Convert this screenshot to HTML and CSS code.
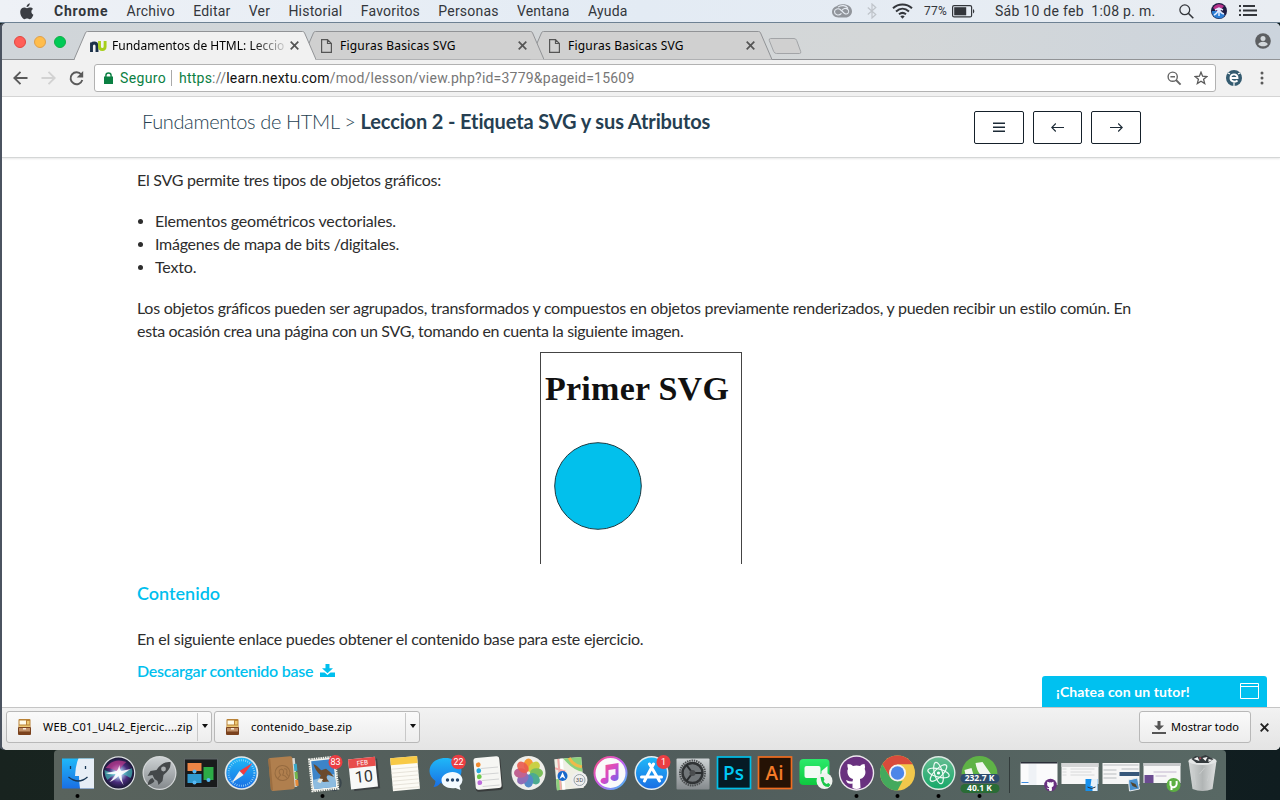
FILE: index.html
```html
<!DOCTYPE html>
<html lang="es">
<head>
<meta charset="utf-8">
<title>Fundamentos de HTML: Leccion 2</title>
<link rel="stylesheet" href="styles.css">
</head>
<body>
<div class="desktop">
  <header class="menubar">
    <svg class="apple" width="14" height="17" viewBox="0 0 14 17"><path fill="#3b3e43" d="M9.8 0.3c.1 1.2-.4 2.1-1 2.8-.6.7-1.4 1.100-2.200 1C6.500 3 7 2.100 7.600 1.500 8.200.8 9 .4 9.800.3zM13 6c-1 .6-1.600 1.500-1.600 2.700 0 1.400.8 2.500 2 3-.3.900-.7 1.700-1.200 2.500-.7 1-1.400 2-2.500 2s-1.400-.6-2.600-.6-1.600.6-2.600.6c-1 0-1.800-.900-2.500-1.900C.6 12.400-.5 8.800.8 6.600c.7-1.300 1.900-2 3.200-2 1.200 0 2 .7 3 .7s1.700-.7 3.100-.7c1.200 0 2.200.500 2.900 1.400z"/></svg>
    <nav class="menus">
      <span class="m m-app">Chrome</span><span class="m">Archivo</span><span class="m">Editar</span><span class="m">Ver</span><span class="m">Historial</span><span class="m">Favoritos</span><span class="m">Personas</span><span class="m">Ventana</span><span class="m">Ayuda</span>
    </nav>
    <div class="status">
      <svg width="20" height="14" viewBox="0 0 20 14" fill="none"><path fill="#91959b" d="M6.500 13.500C2.500 13.500 0 11 0 7.800 0 4.800 2 2.800 4.600 2.200 6 .8 8.500 0 11 .2c4.500 0 9 2.600 9 7 0 3.700-3 6.300-6.500 6.300z"/><path stroke="#e6ecf3" stroke-width="1.100" d="M9.500 9.300C6.500 12.500 2.500 10.500 2.500 7.700s4-4 6.300-1.700l3.700 3.500c3.200 1.800 5.500-1.800 3.500-4-2.300-2.200-5-.8-5.800.8M6 3.200c3-2.500 8-2 10 1"/></svg>
      <svg class="bt" width="10" height="16" viewBox="0 0 10 16" fill="none" stroke="#bfc4ca" stroke-width="1.200"><path d="M.8 4.500l8 7L5 15V1l3.800 3.500-8 7"/></svg>
      <svg class="wifi" width="21" height="16" viewBox="0 0 21 16" fill="none" stroke="#33363b" stroke-width="2"><path d="M1 5.200c5.500-5 13.500-5 19 0M4 8.400c4-3.500 9-3.500 13 0M7 11.300c2.200-1.800 4.800-1.800 7 0"/><path fill="#33363b" stroke="none" d="M8.300 13.200c1.400-1 3-1 4.400 0L10.500 15.700z"/></svg>
      <span class="pct">77%</span>
      <svg class="batt" width="23" height="13" viewBox="0 0 23 13"><rect x=".6" y=".6" width="19" height="11.300" rx="1.500" fill="none" stroke="#33363b" stroke-width="1.200"/><rect x="2.200" y="2.200" width="12" height="8.100" fill="#33363b"/><path fill="#33363b" d="M21 4c1.800.7 1.800 3.800 0 4.500z"/></svg>
      <span class="clock">Sáb 10 de feb&nbsp; 1:08 p. m.</span>
      <svg class="spot" width="15" height="15" viewBox="0 0 15 15" fill="none" stroke="#33363b" stroke-width="1.300"><circle cx="5.800" cy="5.800" r="4.900"/><path stroke-width="1.600" d="M9.300 9.300l5 5"/></svg>
      <svg class="siri" width="16" height="16" viewBox="-8 -8 16 16"><circle r="8" fill="#1d1c42"/><path fill="#b8328b" d="M-6-3A7 7 0 0 1 5-5L0 1z"/><path fill="#2c7ed5" d="M-7 0A7 7 0 0 0 6 4L0 0z"/><path fill="none" stroke="#dfe9ff" stroke-width="1.500" d="M-5 4Q-1 2 0-3 1 2 5 3M0-3V5M-4-1L0-3 4-1"/></svg>
      <svg class="notif" width="18" height="12" viewBox="0 0 18 12" fill="#33363b"><path d="M0 0h2v2H0zM4 0h12v2H4zM0 4.600h2v1.800H0zM4 4.600h14v1.800H4zM0 9h2v2H0zM4 9h14v2H4z"/></svg>
    </div>
  </header>

  <main class="window">
    <div class="tabstrip">
      <div class="lights"><i class="l red"></i><i class="l yel"></i><i class="l grn"></i></div>
      <div class="tab active">
        <svg class="tabshape" width="242" height="29" viewBox="0 0 242 29"><path fill="#f1f1f1" stroke="#919396" d="M0 28.500L11.500 1.800Q12 .5 13.500 .5H228.500Q230 .5 230.500 1.800L242 28.500"/><path fill="#f1f1f1" d="M1 28h240v1H1z"/></svg>
        <div class="tabbody">
          <svg class="fav" width="17" height="11" viewBox="0 0 17 11" fill="none" stroke-width="2.900"><path stroke="#1c3149" d="M1.500 11V1.500M1.500 5Q1.500 2 4.200 2T7 5V11"/><path stroke="#a7cf1b" d="M9.500 0V5.500Q9.500 8.500 12.300 8.500T15.100 5.500V0"/></svg>
          <span class="tt fade">Fundamentos de HTML: Leccio</span>
          <svg class="x" width="9" height="9" viewBox="0 0 9 9" stroke="#555" stroke-width="1.700"><path d="M.7.7l7.600 7.600M8.300.7L.7 8.300"/></svg>
        </div>
      </div>
      <div class="tab two">
        <svg class="tabshape" width="242" height="29" viewBox="0 0 242 29"><path fill="#d0d0d0" stroke="#919396" d="M0 28.500L11.500 1.800Q12 .5 13.500 .5H228.500Q230 .5 230.500 1.800L242 28.500"/></svg>
        <div class="tabbody">
          <svg class="doc" width="11" height="14" viewBox="0 0 11 14" fill="none" stroke="#555" stroke-width="1.200"><path d="M.6.6H6.500L10.400 4.500V13.400H.6zM6.500.6V4.500H10.400"/></svg>
          <span class="tt">Figuras Basicas SVG</span>
          <svg class="x" width="9" height="9" viewBox="0 0 9 9" stroke="#555" stroke-width="1.700"><path d="M.7.7l7.600 7.600M8.300.7L.7 8.300"/></svg>
        </div>
      </div>
      <div class="tab last">
        <svg class="tabshape" width="242" height="29" viewBox="0 0 242 29"><path fill="#d0d0d0" stroke="#919396" d="M0 28.500L11.500 1.800Q12 .5 13.500 .5H228.500Q230 .5 230.500 1.800L242 28.500"/></svg>
        <div class="tabbody">
          <svg class="doc" width="11" height="14" viewBox="0 0 11 14" fill="none" stroke="#555" stroke-width="1.200"><path d="M.6.6H6.500L10.400 4.500V13.400H.6zM6.500.6V4.500H10.400"/></svg>
          <span class="tt">Figuras Basicas SVG</span>
          <svg class="x" width="9" height="9" viewBox="0 0 9 9" stroke="#555" stroke-width="1.700"><path d="M.7.7l7.600 7.600M8.300.7L.7 8.300"/></svg>
        </div>
      </div>
      <svg class="newtab" width="34" height="16" viewBox="0 0 34 16"><path fill="#d0d0d0" stroke="#a2a4a7" d="M2.500.5H26Q28 .5 28.700 2.500L32.700 13.500Q33.300 15.500 31.500 15.500H8.500Q6.500 15.500 5.700 13.500L1.300 2.500Q.8.500 2.500.5z"/></svg>
      <svg class="user" width="16" height="16" viewBox="-8 -8 16 16"><circle r="7.800" fill="#5d5f62"/><circle cy="-2.600" r="2.500" fill="#d2d7db"/><path fill="#d2d7db" d="M-4.800 3.300C-4-.1 4-.1 4.800 3.300 3 6-3 6-4.800 3.300z"/></svg>
    </div>

    <div class="toolbar">
      <svg class="back" width="15" height="14" viewBox="0 0 15 14" fill="none" stroke="#5a5a5a" stroke-width="1.900"><path d="M14.500 7H1.500M7.500.8L1.300 7l6.200 6.200"/></svg>
      <svg class="fwd" width="15" height="14" viewBox="0 0 15 14" fill="none" stroke="#d2d2d2" stroke-width="1.900"><path d="M.5 7h13M7.500.8L13.700 7l-6.200 6.200"/></svg>
      <svg class="reload" width="15" height="15" viewBox="0 0 15 15"><path fill="none" stroke="#5a5a5a" stroke-width="1.900" d="M12.300 3.500A6 6 0 1 0 13.300 9"/><path fill="#5a5a5a" d="M14.200 0V6.500H7.700z"/></svg>
      <div class="omnibox">
        <svg width="9" height="12" viewBox="0 0 9 12"><path fill="#0b8043" d="M0 4.500h1.200V3.600a3.300 3.300 0 0 1 6.600 0v.9H9V12H0zM2.600 4.500h3.800V3.600a1.900 1.900 0 0 0-3.800 0z"/></svg>
        <span class="secure">Seguro</span><i class="bar"></i>
        <span class="url"><b class="sch">https</b>://<b class="host">learn.nextu.com</b>/mod/lesson/view.php?id=3779&amp;pageid=15609</span>
        <svg class="zoomi" width="15" height="15" viewBox="0 0 15 15" fill="none" stroke="#666" stroke-width="1.400"><circle cx="5.700" cy="5.700" r="4.600"/><path d="M3.400 5.700H8"/><path stroke-width="1.900" d="M9 9l4.600 4.600"/></svg>
        <svg class="star" width="14" height="14" viewBox="0 0 14 14" fill="none" stroke="#5a5a5a" stroke-width="1.300"><path d="M7 1.200l1.600 4 4.300.3-3.300 2.800 1.100 4.300L7 10.300l-3.700 2.300 1.100-4.300L1.100 5.500l4.300-.3z"/></svg>
      </div>
      <svg class="ext" width="16" height="16" viewBox="-8 -8 16 16"><circle r="8" fill="#345b70"/><path fill="none" stroke="#fff" stroke-width="1.900" d="M-3.500 0H3.500C3.500-4.800-3.500-4.800-3.500 0-3.500 4 1.500 4.500 3.500 2.500"/><path stroke="#fff" stroke-width="1.200" d="M0 5V8M-6-5L-4-4M6-5L4-4"/></svg>
      <svg class="dots" width="4" height="14" viewBox="0 0 4 14" fill="#5a5a5a"><circle cx="2" cy="2" r="1.500"/><circle cx="2" cy="7" r="1.500"/><circle cx="2" cy="12" r="1.500"/></svg>
    </div>

    <section class="page">
      <div class="pagehead">
        <h1><span>Fundamentos de HTML &gt;</span> <b>Leccion 2 - Etiqueta SVG y sus Atributos</b></h1>
        <div class="navbtns">
          <div class="nb"><svg width="12" height="11" viewBox="0 0 12 11" stroke="#1c2a36" stroke-width="1.400"><path d="M0 1.200h12M0 5.200h12M0 9.200h12"/></svg></div>
          <div class="nb mid"><svg width="13" height="9" viewBox="0 0 13 9" fill="none" stroke="#1c2a36" stroke-width="1.100"><path d="M13 4.500H1M4.800.5L.8 4.500l4 4"/></svg></div>
          <div class="nb"><svg width="13" height="9" viewBox="0 0 13 9" fill="none" stroke="#1c2a36" stroke-width="1.100"><path d="M0 4.500h12M8.200.5l4 4-4 4"/></svg></div>
        </div>
      </div>
      <article class="content">
        <p>El SVG permite tres tipos de objetos gráficos:</p>
        <ul>
          <li class="wide">Elementos geométricos vectoriales.</li>
          <li>Imágenes de mapa de bits /digitales.</li>
          <li class="wide">Texto.</li>
        </ul>
        <p>Los objetos gráficos pueden ser agrupados, transformados y compuestos en objetos previamente renderizados, y pueden recibir un estilo común. En<br><span class="tight">esta ocasión crea una página con un SVG, tomando en cuenta la siguiente imagen.</span></p>
        <div class="figure">
          <div class="figtitle">Primer SVG</div>
          <svg class="circle" width="90" height="90" viewBox="0 0 90 90"><circle cx="45" cy="45" r="43.300" fill="#02c0ec" stroke="#1c3a42"/></svg>
        </div>
        <h2>Contenido</h2>
        <p>En el siguiente enlace puedes obtener el contenido base para este ejercicio.</p>
        <div class="download">Descargar contenido base
          <svg width="15" height="13" viewBox="0 0 15 13" fill="#00bfee"><path d="M5.500 0h4v4.300H13L7.500 9.300 2 4.300H5.500z"/><path d="M0 8.500H4.500L7.500 11l3-2.500H15V13H0z"/></svg>
        </div>
      </article>
      <div class="chat"><span>¡Chatea con un tutor!</span>
        <svg width="19" height="16" viewBox="0 0 19 16" fill="none" stroke="#fff"><path d="M.5.500h18v15H.5zM.5 3.500h18"/></svg>
      </div>
    </section>

    <footer class="shelf">
      <div class="dl">
        <svg class="zip" width="13" height="16" viewBox="0 0 13 16"><rect x=".5" width="12" height="9" rx="1" fill="#b98237"/><path fill="#fffbe8" d="M1.500 1.500h6.500v4h-6.500z"/><path fill="#ecc873" d="M9 2h2.500v3.500h-2.500zM1 6.500h11v1.500H1z"/><rect y="8" width="13" height="8" rx="1" fill="#7b421d"/><path fill="#c09068" d="M1 9h11v3.500H1z"/><path fill="#f7eadb" d="M5 9h3v1.500H5z"/></svg>
        <span class="fname">WEB_C01_U4L2_Ejercic....zip</span><i class="drop"></i>
      </div>
      <div class="dl">
        <svg class="zip" width="13" height="16" viewBox="0 0 13 16"><rect x=".5" width="12" height="9" rx="1" fill="#b98237"/><path fill="#fffbe8" d="M1.500 1.500h6.500v4h-6.500z"/><path fill="#ecc873" d="M9 2h2.500v3.500h-2.500zM1 6.500h11v1.500H1z"/><rect y="8" width="13" height="8" rx="1" fill="#7b421d"/><path fill="#c09068" d="M1 9h11v3.500H1z"/><path fill="#f7eadb" d="M5 9h3v1.500H5z"/></svg>
        <span class="fname second">contenido_base.zip</span><i class="drop"></i>
      </div>
      <div class="showall">
        <svg width="14" height="13" viewBox="0 0 14 13" fill="#555"><path d="M5.500 0h3v4.500H12L7 9.200 2 4.500H5.500zM0 11h14v2H0z"/></svg>
        <span>Mostrar todo</span>
      </div>
      <svg class="sx" width="9" height="9" viewBox="0 0 9 9" stroke="#222" stroke-width="1.900"><path d="M.7.7l7.600 7.600M8.300.7L.7 8.300"/></svg>
    </footer>
  </main>

  <div class="dock">
    <svg class="defs" width="0" height="0"><defs>
      <linearGradient id="blue" x2="0" y2="1"><stop stop-color="#1fb8f8"/><stop offset="1" stop-color="#1a6fe4"/></linearGradient>
      <linearGradient id="silver" x2="0" y2="1"><stop stop-color="#cdd2d4"/><stop offset="1" stop-color="#858a8d"/></linearGradient>
      <linearGradient id="green" x2="0" y2="1"><stop stop-color="#66bd92"/><stop offset="1" stop-color="#17a869"/></linearGradient>
      <linearGradient id="facetime" x2="0" y2="1"><stop stop-color="#2bea6b"/><stop offset="1" stop-color="#0ec93f"/></linearGradient>
      <linearGradient id="note" x2="1" y2="1"><stop stop-color="#fb5c74"/><stop offset=".5" stop-color="#d74ac7"/><stop offset="1" stop-color="#5a6df5"/></linearGradient>
      <linearGradient id="ring" x2="1" y2="1"><stop stop-color="#fa4d7b"/><stop offset=".5" stop-color="#c95df0"/><stop offset="1" stop-color="#39c5f6"/></linearGradient>
      <radialGradient id="siri"><stop stop-color="#fff"/><stop offset=".22" stop-color="#a9c9ee"/><stop offset=".6" stop-color="#4a2c7c"/><stop offset="1" stop-color="#191735"/></radialGradient>
      <linearGradient id="trash" x2="1"><stop stop-color="#d4d7d7"/><stop offset=".5" stop-color="#b1b5b5"/><stop offset="1" stop-color="#dfe1e1"/></linearGradient>
      <g id="octocat"><path fill="#fff" d="M-9-9Q-5-9-3.500-7Q0-8 3.500-7Q5-9 8-9Q9-6 8.200-4Q10 0 7.500 3.500Q6 5.500 3.500 6L4 15Q0 17-4 15L-4 10.500Q-9 12-10.500 7Q-7 8.500-4 8.500L-3.500 6Q-8 5-9 0Q-9.500-3-8.500-4Q-9.500-7-9-9z"/></g>
    </defs></svg>
    <div class="apps">
      <svg class="ic" viewBox="-20.5 -23 41 50"><rect x="-15.500" y="-14.500" width="32" height="30" fill="url(#blue)"/><path fill="#e7eef6" d="M1-14.500H16.500v30H2.500Q1.500 9 1.500 3H-2.500Q-2-8 1-14.500z"/><path fill="none" stroke="#173553" stroke-width="1.300" d="M-9 4Q1 12 10 4M-7-7v3M8-7v3"/><circle cy="23" r="2"/></svg>
      <svg class="ic" viewBox="-20.5 -23 41 50"><circle r="16.800" fill="#dfe1e5"/><circle r="15.600" fill="url(#siri)"/><path fill="#d43c90" opacity=".6" d="M-13-5Q-5-16 8-11Q2-7 0 0Q-5-5-13-5z"/><path fill="#3fd1c1" opacity=".6" d="M0 0Q-8 0-14-3Q-14 3-11 7Q-6 2 0 0zQ8 0 13-5Q15 0 12 5Q6 1 0 0z"/><path fill="#fff" opacity=".9" d="M1-8Q1-3 3-2Q7-3 12-4Q6 0 3 2Q3 7 5 12Q1 7 0 3Q-5 8-9 9Q-4 4-3 1Q-8 2-13 0Q-6-1-2-2Q0-4 1-8z"/></svg>
      <svg class="ic" viewBox="-20.5 -23 41 50"><circle r="17" fill="#d4d7d8"/><circle r="15.800" fill="url(#silver)"/><path fill="#44484a" d="M11-11Q3-12-3-3L-9-2-12 3-7 2-5 6-2 8-1 12 3 8 4 2Q12-4 11-11zM-7 5Q-11 6-12 12-7 11-5 8z"/><circle cx="4" cy="-4" r="2.400" fill="#a9adaf"/></svg>
      <svg class="ic" viewBox="-20.5 -23 41 50"><rect x="-16" y="-14" width="33" height="28.500" fill="#191b1c" stroke="#5f6668"/><path fill="#eb8445" d="M-13-10H1V-2H-13z"/><path fill="#309ad0" d="M-13 1H1V10H-13z"/><path fill="#2cab46" d="M3-6H13V7H3z"/><g fill="#57b8f3"><circle cx="-6" cy="-1.500" r="2"/><circle cx="-6" cy="9.500" r="2"/><circle cx="8" cy="7" r="2"/></g></svg>
      <svg class="ic" viewBox="-20.5 -23 41 50"><circle r="16.800" fill="#e2e7e9"/><circle r="15.200" fill="url(#blue)"/><circle r="12.800" fill="none" stroke="#a7dcf7" stroke-width="2" stroke-dasharray=".7 1.500"/><path fill="#f43b3f" d="M11-10L-2-2 2 2z"/><path fill="#f2f2f2" d="M-10 10L-2-2 2 2z"/></svg>
      <svg class="ic" viewBox="-20.5 -23 41 50"><g transform="rotate(-5)"><path fill="#d7d9d5" d="M10-14h3.500v29h-3.500z"/><path fill="#39a9c9" d="M12-8h3v7h-3z"/><path fill="#73b64c" d="M12 0h3v7h-3z"/><path fill="#e68b38" d="M12 8h3v6h-3z"/><rect x="-13" y="-16" width="24" height="33" rx="2" fill="#b07f4e"/><path fill="#9c6e40" d="M-13-15h2v31h-2z"/><g fill="none" stroke="#966b40"><circle r="7.500"/><path d="M-5 5.500Q-4 3-2 2-5-3-1-4 3-3 0 2 3 3 4 5.500M2-4q4 0 2 5l2 3"/></g></g></svg>
      <svg class="ic" viewBox="-20.5 -23 41 50"><circle cx="10" cy="10" r="7.500" fill="none" stroke="#39454b" stroke-width="1.500"/><g transform="rotate(-6)"><rect x="-13" y="-15" width="26" height="32" fill="none" stroke="#f4f4ee" stroke-width="2" stroke-dasharray="1.500 .8"/><rect x="-12.500" y="-14.500" width="25" height="31" fill="#f4f4ee"/><rect x="-11" y="-13" width="22" height="28" fill="#3d84c8"/><path fill="#8dbce0" d="M-11 6L11 2v13h-22z"/><path fill="#6b4a2c" d="M-9-10Q-5-8-2-3L3-4Q7-1 10 5L4 2Q1 6 5 9L-1 9-5 6-3 2Q-8-3-9-10z"/><path fill="#e9e6d9" d="M-5 5l4 1-3 4-3-2z"/></g><circle cx="12" cy="-11" r="7" fill="#eb3e43"/><text class="badge" x="12" y="-7.800">83</text><circle cx="-1" cy="23" r="2"/></svg>
      <svg class="ic" viewBox="-20.5 -23 41 50"><g transform="translate(-1 0) rotate(-6)"><path fill="#3d4144" d="M-13-13h28v30h-26z"/><rect x="-14" y="-15" width="27" height="30" fill="#f8f8f8"/><path fill="#e74c4b" d="M-14-15h27v9h-27z"/><text class="feb" x="0" y="-8">FEB</text><text class="ten" x="0" y="9">10</text></g></svg>
      <svg class="ic" viewBox="-20.5 -23 41 50"><g transform="rotate(-5)"><rect x="-14" y="-16" width="27" height="33" fill="#fcfbf5"/><path fill="#f8ca46" d="M-14-16h27v7h-27z"/><path stroke="#dedacf" stroke-width=".7" d="M-14-5h27M-14-1h27M-14 3h27M-14 7h27M-14 11h27M-14 15h27"/></g></svg>
      <svg class="ic" viewBox="-20.5 -23 41 50"><path fill="url(#blue)" d="M-1-15C9-15 15-9 15-2S8 11-1 11Q-4 11-6 10-9 14-13 14-11 11-11 8C-15 5-17 2-17-2-17-9-11-15-1-15z"/><path fill="#f3faff" d="M6-1C12-1 16 3 16 7Q16 10 13 13L14 17 9 15C1 16-5 13-5 7-5 3 0-1 6-1z"/><g fill="#26466b"><circle cx="1" cy="7" r="1.700"/><circle cx="6" cy="7" r="1.700"/><circle cx="11" cy="7" r="1.700"/></g><circle cx="12" cy="-11" r="7.300" fill="#eb3e43"/><text class="badge" x="12" y="-7.800">22</text></svg>
      <svg class="ic" viewBox="-20.5 -23 41 50"><g transform="rotate(-5)"><rect x="-13" y="-15" width="27" height="33" rx="3" fill="#383c3c"/><rect x="-13" y="-16" width="26" height="32" rx="3" fill="#f6f6f3"/><path stroke="#d3d4d4" d="M-6-5H11M-6 1H11M-6 7H11M-6 13H11"/><circle cx="-8.500" cy="-9" r="2.400" fill="#f28a2e"/><circle cx="-8.500" cy="-3" r="2.400" fill="#28a8df"/><circle cx="-8.500" cy="3" r="2.400" fill="#6dc849"/><circle cx="-8.500" cy="9" r="2.400" fill="#bd6bdc"/></g></svg>
      <svg class="ic" viewBox="-20.5 -23 41 50"><circle r="17" fill="#eeeeea"/><g opacity=".95"><ellipse cy="-8" rx="4.800" ry="6.500" fill="#f6962c"/><ellipse cy="-8" rx="4.800" ry="6.500" fill="#c8cf3d" transform="rotate(45)"/><ellipse cy="-8" rx="4.800" ry="6.500" fill="#76bd53" transform="rotate(90)"/><ellipse cy="-8" rx="4.800" ry="6.500" fill="#43a88c" transform="rotate(135)"/><ellipse cy="-8" rx="4.800" ry="6.500" fill="#4b84c6" transform="rotate(180)"/><ellipse cy="-8" rx="4.800" ry="6.500" fill="#8b68b5" transform="rotate(225)"/><ellipse cy="-8" rx="4.800" ry="6.500" fill="#bf5b8d" transform="rotate(270)"/><ellipse cy="-8" rx="4.800" ry="6.500" fill="#ea5346" transform="rotate(315)" opacity=".9"/></g></svg>
      <svg class="ic" viewBox="-20.5 -23 41 50"><g transform="rotate(-5)"><rect x="-14" y="-15" width="27" height="31" fill="#efefe4"/><path fill="#8cd17c" d="M-5-15H13V0Q3-3-5-15zM-14 5h5v11h-5z"/><path fill="none" stroke="#f0b94b" stroke-width="3" d="M1-15Q4-7 13-5"/><path stroke="#fff" stroke-width="3" d="M-7-15V16"/><path stroke="#f3acaa" stroke-width="2" d="M-10-15V16M-14-6L-4-2"/></g><circle cx="-7" cy="3" r="5" fill="#1769cc"/><path fill="#fff" d="M-7-1l3 7-3-2-3 2z"/><circle cx="10" cy="7" r="8" fill="#efefef"/><circle cx="10" cy="7" r="5.500" fill="none" stroke="#9aa6aa"/><text class="map3d" x="10" y="9.200">3D</text></svg>
      <svg class="ic" viewBox="-20.5 -23 41 50"><circle r="16" fill="#fafafa" stroke="url(#ring)" stroke-width="2"/><path fill="url(#note)" d="M-5-8L8-10V5A4 3 0 1 1 5 2V-4L-2-3V8A4 3 0 1 1-5 5z"/></svg>
      <svg class="ic" viewBox="-20.5 -23 41 50"><circle r="17" fill="#e4ecef"/><circle r="15.500" fill="url(#blue)"/><path fill="none" stroke="#fff" stroke-width="3" stroke-linecap="round" d="M2-9L-7 8M-2-9L8 8M-10 4H10"/><circle cx="12" cy="-11" r="7" fill="#eb3e43"/><text class="badge" x="12" y="-7.800">1</text></svg>
      <svg class="ic" viewBox="-20.5 -23 41 50"><rect x="-16" y="-14.500" width="33" height="31" rx="1" fill="url(#silver)"/><circle r="12.500" fill="none" stroke="#4b4e50" stroke-width="2" stroke-dasharray="1.500 .8"/><circle r="10" fill="#717679" stroke="#303335" stroke-width="2.500"/><path stroke="#282b2d" stroke-width="2" d="M0 0h10M0 0L-6-8M0 0L-6 8"/><circle r="3" fill="#4a4d4f"/></svg>
      <svg class="ic" viewBox="-20.5 -23 41 50"><rect x="-16" y="-16" width="33" height="31.500" fill="#051b25" stroke="#00bfe8" stroke-width="1.700"/><text class="adobe ps" x="0" y="6.500">Ps</text></svg>
      <svg class="ic" viewBox="-20.5 -23 41 50"><rect x="-16" y="-16" width="33" height="31.500" fill="#251204" stroke="#ef6d20" stroke-width="1.700"/><text class="adobe ai" x="0" y="6.500">Ai</text></svg>
      <svg class="ic" viewBox="-20.5 -23 41 50"><rect x="-16" y="-14" width="30" height="26" rx="4" fill="url(#facetime)"/><rect x="-11" y="-7" width="16" height="12" rx="2" fill="#f3fbf4"/><path fill="#f3fbf4" d="M6-2L12-7V4L6 1z"/><circle cx="9" cy="8" r="8" fill="#f0f3ef"/><path fill="#1ac749" d="M5 4l3 0 1 3-1 1q1 2 3 3l2-1 2 2-2 2Q6 14 5 4z"/></svg>
      <svg class="ic" viewBox="-20.5 -23 41 50"><circle r="17.700" fill="#eee9ef"/><circle r="16.300" fill="#69317f"/><use href="#octocat"/><circle cy="23" r="2"/></svg>
      <svg class="ic" viewBox="-20.5 -23 41 50"><circle r="17.500" fill="#f2c84b"/><path fill="#d94b3c" d="M-15.200-8.700A17.500 17.500 0 0 1 15.200-8.700H0L-7.500 4.300z"/><path fill="#44a95d" d="M-15.200-8.700L-7.500 4.300Q-4 9 5 8L0 17.500A17.500 17.500 0 0 1-15.200-8.700z"/><circle r="8.500" fill="#f5f5f5"/><circle r="6.700" fill="#4c86e8"/><circle cy="23" r="2"/></svg>
      <svg class="ic" viewBox="-20.5 -23 41 50"><circle r="17" fill="#dce9e3"/><circle r="15.600" fill="url(#green)"/><g fill="none" stroke="#eefaf4" stroke-width="1.200"><ellipse rx="4" ry="11" transform="rotate(-15)"/><ellipse rx="4" ry="11" transform="rotate(45)"/><ellipse rx="4" ry="11" transform="rotate(105)"/></g><circle r="1.600" fill="#fff"/><circle cy="23" r="2"/></svg>
      <svg class="ic" viewBox="-20.5 -23 41 50"><path fill="#5fb346" d="M-18 1A18 18 0 0 1 18 1z"/><path fill="#f2f6ef" d="M-15-3L-8-5-6 2H-14zM-4-10L3-11 12 2H1Q-3-3-4-10z"/><rect x="-19" y="1" width="39" height="9" rx="4.500" fill="#2d4c6c"/><rect x="-19" y="11" width="39" height="9" rx="4.500" fill="#2a6c36"/><text class="rate" x="0" y="8.400">232.7 K</text><text class="rate" x="0" y="18.200">40.1 K</text><circle cy="23" r="2"/></svg>
    </div>
    <i class="sep"></i>
    <div class="minis">
      <svg class="ic" viewBox="-20.5 -23 41 50"><path fill="#fbfbfc" d="M-18-11h37v23h-37z"/><path fill="#2b2e38" d="M-18-11h37v1.500h-37z"/><path fill="#eff2f6" d="M-10-9h8v21h-8z"/><path fill="#3e8de0" d="M-17 9h7v1h-7z"/><circle cx="12" cy="12" r="6.300" fill="#69317f"/><use href="#octocat" transform="translate(12 12) scale(.37)"/></svg>
      <svg class="ic" viewBox="-20.5 -23 41 50"><path fill="#f7f7f7" d="M-18-10h37v21h-37z"/><path fill="#d4d5d6" d="M-18-10h37v4h-37z"/><path stroke="#d0d2d3" stroke-width=".8" d="M-9-4H15M-9-1H12M-9 2H15M-17-4h4M-17-1h4M-17 2h4"/><path fill="#1590ee" d="M6 6h12v12H6z"/><path fill="#e6f0f8" d="M12 6h6v12h-5v-5h-2z"/><path stroke="#234" fill="none" d="M8 14q4 3 8 0"/></svg>
      <svg class="ic" viewBox="-20.5 -23 41 50"><path fill="#f6f6f6" d="M-18-10h37v21h-37z"/><path stroke="#b8bcbf" d="M-17-8H18M-17-3h13M-17 1h13M-17 5h13M1-4h17"/><path fill="#37577a" d="M-1-1h20v4H-1z"/><path fill="#4a91ce" stroke="#e9edf0" d="M8 7l9-2 2 11-10 2z"/><path fill="#53452e" d="M10 9l5 2 2 4-5-2z"/></svg>
      <svg class="ic" viewBox="-20.5 -23 41 50"><path fill="#f7f7f7" d="M-18-10h37v20h-37z"/><path fill="#c7c9cb" d="M-18-10h37v3h-37z"/><path fill="#6b4b91" d="M-17 2h9v8h-9z"/><path stroke="#c2b6ce" d="M-8-1H15M-6 3H5"/><circle cx="12" cy="12" r="7" fill="#5daf43"/><path fill="none" stroke="#fff" stroke-width="2" d="M9 8v4q1 3 4 2 3-1 2-6M10 13v4"/></svg>
      <svg class="ic" viewBox="-20.5 -23 41 50"><path fill="url(#trash)" d="M-14-12L-10 16Q0 20 10 16L14-12z"/><ellipse cy="-12" rx="14" ry="4" fill="#e4e6e6"/><path fill="#343a3d" d="M-11-14l4-3 5 1 5-2 8 4-5 4-12 0z"/><path fill="#f5f5f5" d="M-9-14l4-2 2 4zM0-15l5-1-2 4zM6-14l4 1-4 2z"/><path fill="#ba4a55" d="M-3-16l2 1-2 2z"/><path stroke="#c9cccc" fill="none" d="M-9-5L-7 12M-3 1L2-5M5 8L8-4"/></svg>
    </div>
  </div>
</div>
</body>
</html>
```

FILE: styles.css
```css
* { box-sizing: border-box; }
body { margin: 0; font-family: Lato, sans-serif; }
svg { display: block; flex: none; }
.desktop { width: 1280px; height: 800px; overflow: hidden; display: flex; flex-direction: column;
  background: linear-gradient(90deg, #18231f 0, #1a2823 40%, #101d20 100%); }

.menubar { height: 23px; flex: none; display: flex; align-items: center; padding-left: 20px;
  background: linear-gradient(90deg, #eef1f6, #e3ebf4 50%, #e9edf2); border-bottom: 1px solid #6d8193;
  font: 14px/22px Roboto, sans-serif; color: #33363b; }
.menus { display: flex; margin-left: 20px; gap: 18.3px; letter-spacing: .2px; white-space: nowrap; }
.m-app { font-weight: 700; letter-spacing: .8px; }
.status { margin-left: auto; display: flex; align-items: center; padding-right: 23px; white-space: nowrap; }
.bt { margin-left: 15px; }
.wifi { margin-left: 15px; }
.pct { font-size: 12px; margin-left: 11px; width: 28px; letter-spacing: .2px; }
.clock { margin-left: 20px; width: 162px; letter-spacing: .27px; }
.spot { margin-left: 22px; }
.siri { margin-left: 17px; }
.notif { margin-left: 12px; }

.window { margin-left: 2px; height: 727px; flex: none; display: flex; flex-direction: column;
  border-radius: 5px; overflow: hidden; background: #fff; box-shadow: -3px 0 0 #4b5360; }
.tabstrip { height: 37px; flex: none; display: flex; align-items: flex-end; position: relative;
  background: linear-gradient(90deg, #d0d5d9, #d4d7d8 70%, #ccd4dd); border-bottom: 1px solid #919396; }
.lights { display: flex; gap: 8px; width: 72px; padding-left: 12px; align-self: center; margin-top: 2px; }
.l { width: 12px; height: 12px; border-radius: 50%; border: 1px solid #e2463f; background: #ff5f58; }
.yel { background: #ffbd4c; border-color: #dfa04a; }
.grn { background: #00ca56; border-color: #10af45; }
.tab { display: grid; width: 242px; height: 29px; margin-bottom: -1px; flex: none; position: relative; }
.tab > * { grid-area: 1 / 1; }
.active { z-index: 3; }
.two, .last { margin-left: -14px; }
.two { z-index: 2; }
.last { z-index: 1; }
.tabbody { display: flex; align-items: center; padding: 0 17px 0 16px; }
.fav { margin-top: 2px; }
.doc { margin: 1px 0 0 3px; }
.tt { font: 12px/16px "Noto Sans", sans-serif; color: #000; margin-left: 5px; width: 178px; white-space: nowrap; }
.doc + .tt { margin-left: 8px; width: 175px; letter-spacing: .22px; }
.fade { -webkit-mask-image: linear-gradient(90deg, #000 140px, transparent 178px); mask-image: linear-gradient(90deg, #000 140px, transparent 178px); }
.x { margin-left: auto; }
.newtab { margin: 0 0 5px -4px; }
.user { margin: 0 9px 10px auto; }

.toolbar { height: 37px; flex: none; display: flex; align-items: center; padding-left: 11px;
  background: #f1f1f1; border-bottom: 1px solid #d2d2d2; }
.fwd { margin-left: 13px; }
.reload { margin-left: 13px; }
.omnibox { width: 1122px; height: 28px; margin-left: 10px; background: #fff; border: 1px solid #b2b2b2; border-radius: 3px;
  display: flex; align-items: center; padding: 0 7px 0 9px; font: 14px/20px Roboto, sans-serif; color: #777; white-space: nowrap; }
.secure { color: #0b8043; margin-left: 7px; letter-spacing: .35px; }
.bar { width: 1px; height: 16px; background: #aaa; margin: 0 7px 0 5px; }
.url { letter-spacing: .22px; }
.url b { font-weight: 400; }
.sch { color: #0b8043; }
.host { color: #111; }
.zoomi { margin-left: auto; }
.star { margin-left: 12px; }
.ext { margin-left: 10px; }
.dots { margin-left: 18px; }

.page { height: 610px; flex: none; position: relative; color: #2d2d2d; background: #fff; }
.pagehead { height: 61px; display: flex; justify-content: space-between; padding: 13px 139px 0 140px;
  border-bottom: 1px solid #d4d6d6; box-shadow: 0 1px 2px #e8e8e8; }
h1 { margin: -1px 0 0; font: 300 20px/24px Lato, sans-serif; color: #263f52; white-space: nowrap; letter-spacing: -.35px; }
h1 b { font-weight: 700; letter-spacing: -.13px; }
.navbtns { display: flex; gap: 9px; padding-top: 1px; }
.nb { width: 50px; height: 33px; border: 1px solid #15202a; border-radius: 2px; display: flex; align-items: center; justify-content: center; }
.mid { width: 49px; }
.content { padding: 10px 0 0 135px; font-size: 16px; line-height: 23px; letter-spacing: -.26px; }
.content p { margin: 0; white-space: nowrap; }
.content ul { margin: 18px 0; padding: 0 0 0 18px; }
.content li::marker { font-size: 15px; }
.content .wide { letter-spacing: -.18px; }
.content .tight { letter-spacing: -.32px; }
.figure { width: 202px; height: 212px; margin: 10px 0 0 403px; border: 1px solid #444; border-bottom: 0; padding: 17px 0 0 4px; }
.figtitle { font: 700 34px/38px "Liberation Serif", serif; letter-spacing: .25px; color: #111; white-space: nowrap; }
.circle { margin: 33px 0 0 8px; }
h2 { margin: 18px 0 22px; font: 600 18px/23px Lato, sans-serif; letter-spacing: 0; color: #00bfee; }
.download { display: flex; align-items: center; gap: 7px; margin-top: 9px; color: #00bfee; font-weight: 600; }
.chat { position: absolute; right: 13px; bottom: 0; width: 225px; height: 31px; padding: 0 8px 1px 14px;
  display: flex; align-items: center; justify-content: space-between; background: #00c1f0; color: #fff;
  border-radius: 3px 3px 0 0; font-weight: 700; font-size: 14px; letter-spacing: .1px; white-space: nowrap; }

.shelf { height: 43px; flex: none; display: flex; align-items: flex-start; padding: 3px 11px 0 4px; gap: 2px;
  border-top: 1px solid #c5c5c5; background: linear-gradient(#f2f2f2, #e4e4e4); font: 11px/16px "Noto Sans", sans-serif; color: #000; }
.dl { width: 206px; height: 32px; display: flex; align-items: center; border: 1px solid #b8b8b8; border-radius: 3px;
  background: linear-gradient(#fafafa, #ededed); padding-left: 11px; white-space: nowrap; }
.fname { margin-left: 12px; letter-spacing: .23px; }
.second { letter-spacing: .12px; }
.drop { margin-left: auto; width: 14px; height: 28px; border-left: 1px solid #c8c8c8; display: flex; align-items: center; justify-content: center; }
.drop::before { content: ""; margin-bottom: 3px; border: 3px solid transparent; border-top: 4px solid #111; border-bottom: 0; }
.showall { width: 112px; height: 32px; margin-left: auto; display: flex; align-items: center; border: 1px solid #b8b8b8;
  border-radius: 3px; background: linear-gradient(#fafafa, #ededed); padding-left: 12px; gap: 5px; white-space: nowrap; }
.sx { margin: 12px 0 0 7px; }

.dock { width: 1172px; height: 50px; margin-left: 54px; flex: none; display: flex; padding-left: 3px;
  background: linear-gradient(90deg, #59635d, #505c5b 50%, #586864); border-radius: 4px 4px 0 0; }
.defs { position: absolute; }
.apps, .minis { display: flex; }
.ic { width: 41px; height: 50px; }
.sep { width: 1px; height: 36px; margin: 7px 8px 0 9px; background: #323b3b; }
.badge { font: 9px Roboto, sans-serif; fill: #fff; text-anchor: middle; }
.feb { font: 6.5px Roboto, sans-serif; fill: #fff; text-anchor: middle; }
.ten { font: 16px Roboto, sans-serif; fill: #333; text-anchor: middle; }
.map3d { font: 6px Roboto, sans-serif; text-anchor: middle; fill: #555; }
.adobe { font: 600 19px "Open Sans", sans-serif; text-anchor: middle; }
.ps { fill: #00c8f4; }
.ai { fill: #f47b28; }
.rate { font: 700 8.5px "Open Sans", sans-serif; fill: #fff; text-anchor: middle; }
```
